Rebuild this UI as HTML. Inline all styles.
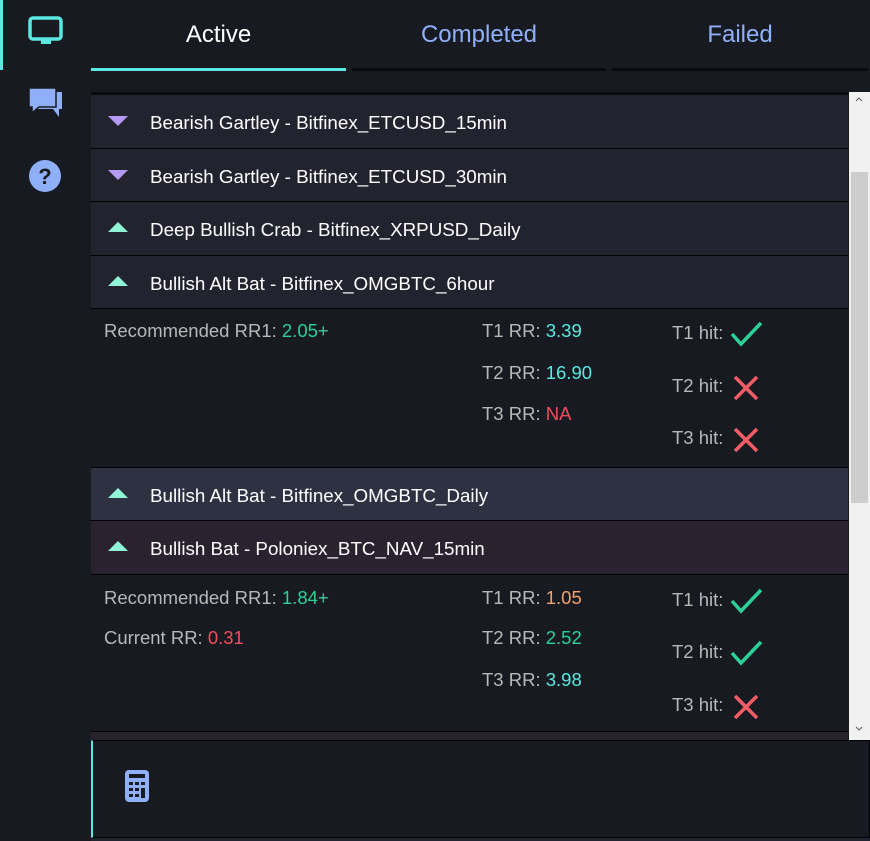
<!DOCTYPE html>
<html><head><style>
*{margin:0;padding:0;box-sizing:border-box}
body{width:870px;height:841px;background:#181a22;font-family:"Liberation Sans",sans-serif;position:relative;overflow:hidden;color:#fff}
.a{position:absolute}
.tab{position:absolute;top:0;height:70px;line-height:70px;text-align:center;font-size:24px}
.row{position:absolute;left:91px;width:757px;height:52px;background:#22232f;border-bottom:1px solid #000;font-size:18.8px;line-height:56px;color:#fff}
.row span{position:absolute;left:59px}
.tri{position:absolute;left:17px;top:21px;width:0;height:0;border-left:10px solid transparent;border-right:10px solid transparent}
.dn{border-top:10px solid #b49af0}
.up{border-bottom:10px solid #90f5d6;top:20px}
.t{position:absolute;font-size:18.5px;color:#b8b8b8;white-space:nowrap}
.g{color:#2bd196}.c{color:#5ae8e0}.r{color:#f24c5c}.o{color:#f0a070}
</style></head><body>
<div class="a" style="left:0;top:0;width:90px;height:841px;background:#181a22"></div>
<div class="a" style="left:0;top:0;width:3px;height:70px;background:#5ae8e0"></div>
<svg class="a" style="left:28px;top:16px" width="36" height="30" viewBox="0 0 36 30"><rect x="2" y="2" width="31" height="21" rx="3" fill="none" stroke="#5ae8e0" stroke-width="3.5"/><rect x="13" y="24" width="10" height="4" fill="#5ae8e0"/></svg>
<svg class="a" style="left:28px;top:87px" width="35" height="32" viewBox="0 0 35 32"><path d="M9 5h25v17h-3v8l-6-8H9z" fill="#8fb0f8"/><path d="M1 1h27v19H11l-7 6v-6H1z" fill="#8fb0f8" stroke="#181a22" stroke-width="1.5"/></svg>
<svg class="a" style="left:28px;top:159px" width="34" height="34" viewBox="0 0 34 34"><circle cx="17" cy="17" r="16" fill="#8fb0f8"/><text x="17" y="25" text-anchor="middle" font-family="Liberation Sans" font-weight="bold" font-size="22" fill="#181a22">?</text></svg>

<div class="tab" style="left:91px;width:255px;color:#fff">Active</div>
<div class="tab" style="left:352px;width:254px;color:#8fb0f8">Completed</div>
<div class="tab" style="left:612px;width:256px;color:#8fb0f8">Failed</div>
<div class="a" style="left:91px;top:68px;width:255px;height:3px;background:#5ae8e0"></div>
<div class="a" style="left:352px;top:68px;width:254px;height:3px;background:#0a0b0f"></div>
<div class="a" style="left:612px;top:68px;width:256px;height:3px;background:#0a0b0f"></div>

<div class="a" style="left:91px;top:92px;width:757px;height:3px;background:#0a0b0f"></div>
<div class="row" style="top:95px;height:54px"><div class="tri dn"></div><span>Bearish Gartley - Bitfinex_ETCUSD_15min</span></div>
<div class="row" style="top:149px;height:53px"><div class="tri dn"></div><span>Bearish Gartley - Bitfinex_ETCUSD_30min</span></div>
<div class="row" style="top:202px;height:54px"><div class="tri up"></div><span>Deep Bullish Crab - Bitfinex_XRPUSD_Daily</span></div>
<div class="row" style="top:256px;height:53px"><div class="tri up"></div><span>Bullish Alt Bat - Bitfinex_OMGBTC_6hour</span></div>

<div class="t" style="left:104px;top:320px">Recommended RR1: <span class="g">2.05+</span></div>
<div class="t" style="left:482px;top:320px">T1 RR: <span class="c">3.39</span></div>
<div class="t" style="left:482px;top:362px">T2 RR: <span class="c">16.90</span></div>
<div class="t" style="left:482px;top:403px">T3 RR: <span class="r">NA</span></div>
<div class="t" style="left:672px;top:322px">T1 hit:</div>
<div class="t" style="left:672px;top:375px">T2 hit:</div>
<div class="t" style="left:672px;top:427px">T3 hit:</div>

<div class="row" style="top:467px;height:54px;background:#2e3141;border-top:1px solid #000"><div class="tri up"></div><span>Bullish Alt Bat - Bitfinex_OMGBTC_Daily</span></div>
<div class="row" style="top:521px;height:54px;background:#2a222f"><div class="tri up"></div><span>Bullish Bat - Poloniex_BTC_NAV_15min</span></div>

<div class="t" style="left:104px;top:587px">Recommended RR1: <span class="g">1.84+</span></div>
<div class="t" style="left:104px;top:627px">Current RR: <span class="r">0.31</span></div>
<div class="t" style="left:482px;top:587px">T1 RR: <span class="o">1.05</span></div>
<div class="t" style="left:482px;top:627px">T2 RR: <span class="g">2.52</span></div>
<div class="t" style="left:482px;top:669px">T3 RR: <span class="c">3.98</span></div>
<div class="t" style="left:672px;top:589px">T1 hit:</div>
<div class="t" style="left:672px;top:641px">T2 hit:</div>
<div class="t" style="left:672px;top:694px">T3 hit:</div>

<svg class="a" style="left:730px;top:320px" width="34" height="30"><path d="M2 14l9 10L31 3" fill="none" stroke="#2bd196" stroke-width="3.5"/></svg>
<svg class="a" style="left:733px;top:375px" width="26" height="26"><path d="M2 2l22 22M24 2L2 24" stroke="#f25c64" stroke-width="3.5"/></svg>
<svg class="a" style="left:733px;top:427px" width="26" height="26"><path d="M2 2l22 22M24 2L2 24" stroke="#f25c64" stroke-width="3.5"/></svg>
<svg class="a" style="left:730px;top:587px" width="34" height="30"><path d="M2 14l9 10L31 3" fill="none" stroke="#2bd196" stroke-width="3.5"/></svg>
<svg class="a" style="left:730px;top:639px" width="34" height="30"><path d="M2 14l9 10L31 3" fill="none" stroke="#2bd196" stroke-width="3.5"/></svg>
<svg class="a" style="left:733px;top:694px" width="26" height="26"><path d="M2 2l22 22M24 2L2 24" stroke="#f25c64" stroke-width="3.5"/></svg>

<div class="a" style="left:91px;top:731px;width:757px;height:9px;background:#2a222f;border-top:1px solid #000"></div>
<div class="a" style="left:849px;top:92px;width:21px;height:648px;background:#f1f1f1"></div>
<div class="a" style="left:851px;top:172px;width:17px;height:331px;background:#cdcdcd"></div>
<svg class="a" style="left:855px;top:96px" width="8" height="6"><path d="M1 5l3-3 3 3" fill="none" stroke="#606060" stroke-width="1"/></svg>
<svg class="a" style="left:855px;top:726px" width="8" height="6"><path d="M1 1l3 3 3-3" fill="none" stroke="#606060" stroke-width="1"/></svg>

<div class="a" style="left:91px;top:740px;width:779px;height:98px;background:#181a22;border:1px solid #000;border-left:2px solid #5ae8e0"></div>
<div class="a" style="left:91px;top:838px;width:779px;height:3px;background:#22232f"></div>
<svg class="a" style="left:124px;top:769px" width="28" height="36" viewBox="0 0 28 36"><rect x="1" y="1" width="24" height="32" rx="4" fill="#8fb0f8"/><rect x="5" y="5" width="16" height="4" fill="#181a22"/><g fill="#181a22"><rect x="5" y="13" width="4" height="3"/><rect x="11" y="13" width="4" height="3"/><rect x="17" y="13" width="4" height="3"/><rect x="5" y="19" width="4" height="3"/><rect x="11" y="19" width="4" height="3"/><rect x="17" y="19" width="4" height="10"/><rect x="5" y="25" width="4" height="3"/><rect x="11" y="25" width="4" height="3"/></g></svg>
</body></html>
